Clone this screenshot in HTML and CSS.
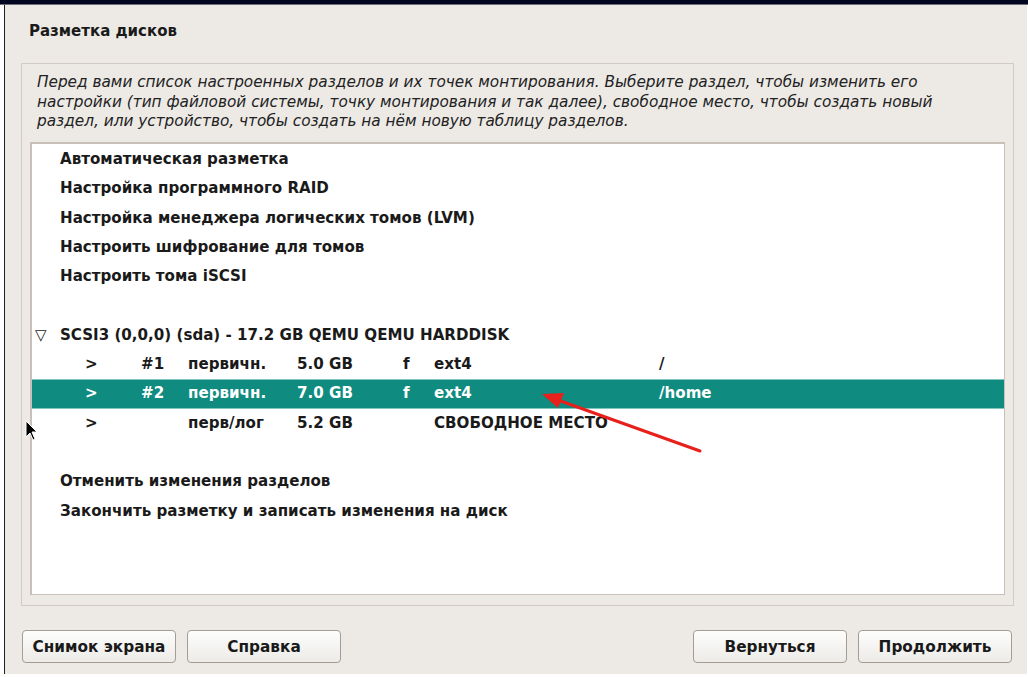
FILE: index.html
```html
<!DOCTYPE html>
<html lang="ru">
<head>
    <meta charset="UTF-8">
    <title>Разметка дисков</title>
    <link rel="stylesheet" href="styles.css">
</head>
<body>
    <div class="topbar"></div>
    <div class="window">
        <h1 class="title">Разметка дисков</h1>
        <div class="frame">
            <p class="intro">Перед вами список настроенных разделов и их точек монтирования. Выберите раздел, чтобы изменить его<br>настройки (тип файловой системы, точку монтирования и так далее), свободное место, чтобы создать новый<br>раздел, или устройство, чтобы создать на нём новую таблицу разделов.</p>
            <div class="list">
                <div class="item">Автоматическая разметка</div>
                <div class="item">Настройка программного RAID</div>
                <div class="item">Настройка менеджера логических томов (LVM)</div>
                <div class="item">Настроить шифрование для томов</div>
                <div class="item">Настроить тома iSCSI</div>
                <div class="item"></div>
                <div class="item disk"><span class="tri">▽</span>SCSI3 (0,0,0) (sda) - 17.2 GB QEMU QEMU HARDDISK</div>
                <div class="item part">
                    <span>&gt;</span><span>#1</span><span>первичн.</span><span>5.0 GB</span><span>f</span><span>ext4</span><span>/</span>
                </div>
                <div class="item part selected">
                    <span>&gt;</span><span>#2</span><span>первичн.</span><span>7.0 GB</span><span>f</span><span>ext4</span><span>/home</span>
                </div>
                <div class="item part">
                    <span>&gt;</span><span></span><span>перв/лог</span><span>5.2 GB</span><span></span><span>СВОБОДНОЕ МЕСТО</span><span></span>
                </div>
                <div class="item"></div>
                <div class="item">Отменить изменения разделов</div>
                <div class="item">Закончить разметку и записать изменения на диск</div>
            </div>
        </div>
        <div class="buttons">
            <button class="btn">Снимок экрана</button>
            <button class="btn">Справка</button>
            <div class="spacer"></div>
            <button class="btn">Вернуться</button>
            <button class="btn">Продолжить</button>
        </div>

        <!-- поверх: стрелка и курсор мыши -->
        <svg class="arrow" width="200" height="80" viewBox="0 0 200 80">
            <line x1="175" y1="73" x2="30" y2="21" stroke="#e8201c" stroke-width="3" stroke-linecap="round"/>
            <polygon points="17,16 39,15 33,30" fill="#e8201c"/>
        </svg>
        <svg class="cursor" width="14" height="22" viewBox="0 0 14 22">
            <polygon points="1,1 1,17 5,13 8,20 10,19 7,12 12,12" fill="#000" stroke="#fff" stroke-width="1"/>
        </svg>
    </div>
</body>
</html>
```

FILE: styles.css
```css
body {
    margin: 0;
    padding: 0;
    background: #ffffff;
    font-family: "DejaVu Sans", "Noto Sans", sans-serif;
    color: #1a1a1a;
    width: 1028px;
    height: 677px;
    overflow: hidden;
}
.topbar {
    height: 4px;
    background: #030620;
    border-bottom: 1px solid #6c6c78;
}
.window {
    position: relative;
    margin-left: 4px;
    width: 1023px;
    height: 669px;
    background: #edeae6;
    border-left: 1px solid #202020;
    box-sizing: border-box;
}
.title {
    margin: 0;
    padding: 17px 0 0 24px;
    height: 41px;
    box-sizing: border-box;
    font-size: 15px;
    font-weight: bold;
}
.frame {
    margin: 17px 0 0 16px;
    width: 993px;
    height: 543px;
    box-sizing: border-box;
    border: 1px solid #d2cbc3;
    padding: 0 8px 8px 8px;
}
.intro {
    margin: 9px 0 0 7px;
    height: 69px;
    font-style: italic;
    font-size: 15.3px;
    line-height: 19.5px;
    color: #222;
}
.list {
    background: #ffffff;
    border: 1px solid #c9c1b9;
    border-top-width: 2px;
    border-left-width: 2px;
    height: 453px;
    box-sizing: border-box;
    padding-top: 1px;
}
.item {
    height: 29.3px;
    line-height: 29.3px;
    padding-left: 28px;
    font-size: 15.1px;
    font-weight: bold;
    white-space: nowrap;
}
.disk {
    padding-left: 3px;
}
.tri {
    display: inline-block;
    width: 25px;
    font-size: 15px;
}
.part {
    display: grid;
    grid-template-columns: 56px 47px 109px 106px 31px 225px auto;
    padding-left: 53px;
}
.selected {
    background: #0f8b7f;
    color: #ffffff;
    box-shadow: inset 0 1px 0 #7fc4bd, inset 0 -1px 0 #7fc4bd;
}
.buttons {
    display: flex;
    gap: 11px;
    padding: 24px 0 0 17px;
    width: 990px;
}
.spacer {
    flex: 1;
}
.btn {
    width: 154px;
    height: 33px;
    font-family: "DejaVu Sans", sans-serif;
    font-size: 15.3px;
    font-weight: bold;
    color: #1a1a1a;
    background: linear-gradient(#fdfdfc, #ecebe8);
    border: 1px solid #a39d96;
    border-radius: 4px;
    padding: 0;
}
.arrow {
    position: absolute;
    left: 520px;
    top: 373px;
}
.cursor {
    position: absolute;
    left: 20px;
    top: 415px;
}
```
